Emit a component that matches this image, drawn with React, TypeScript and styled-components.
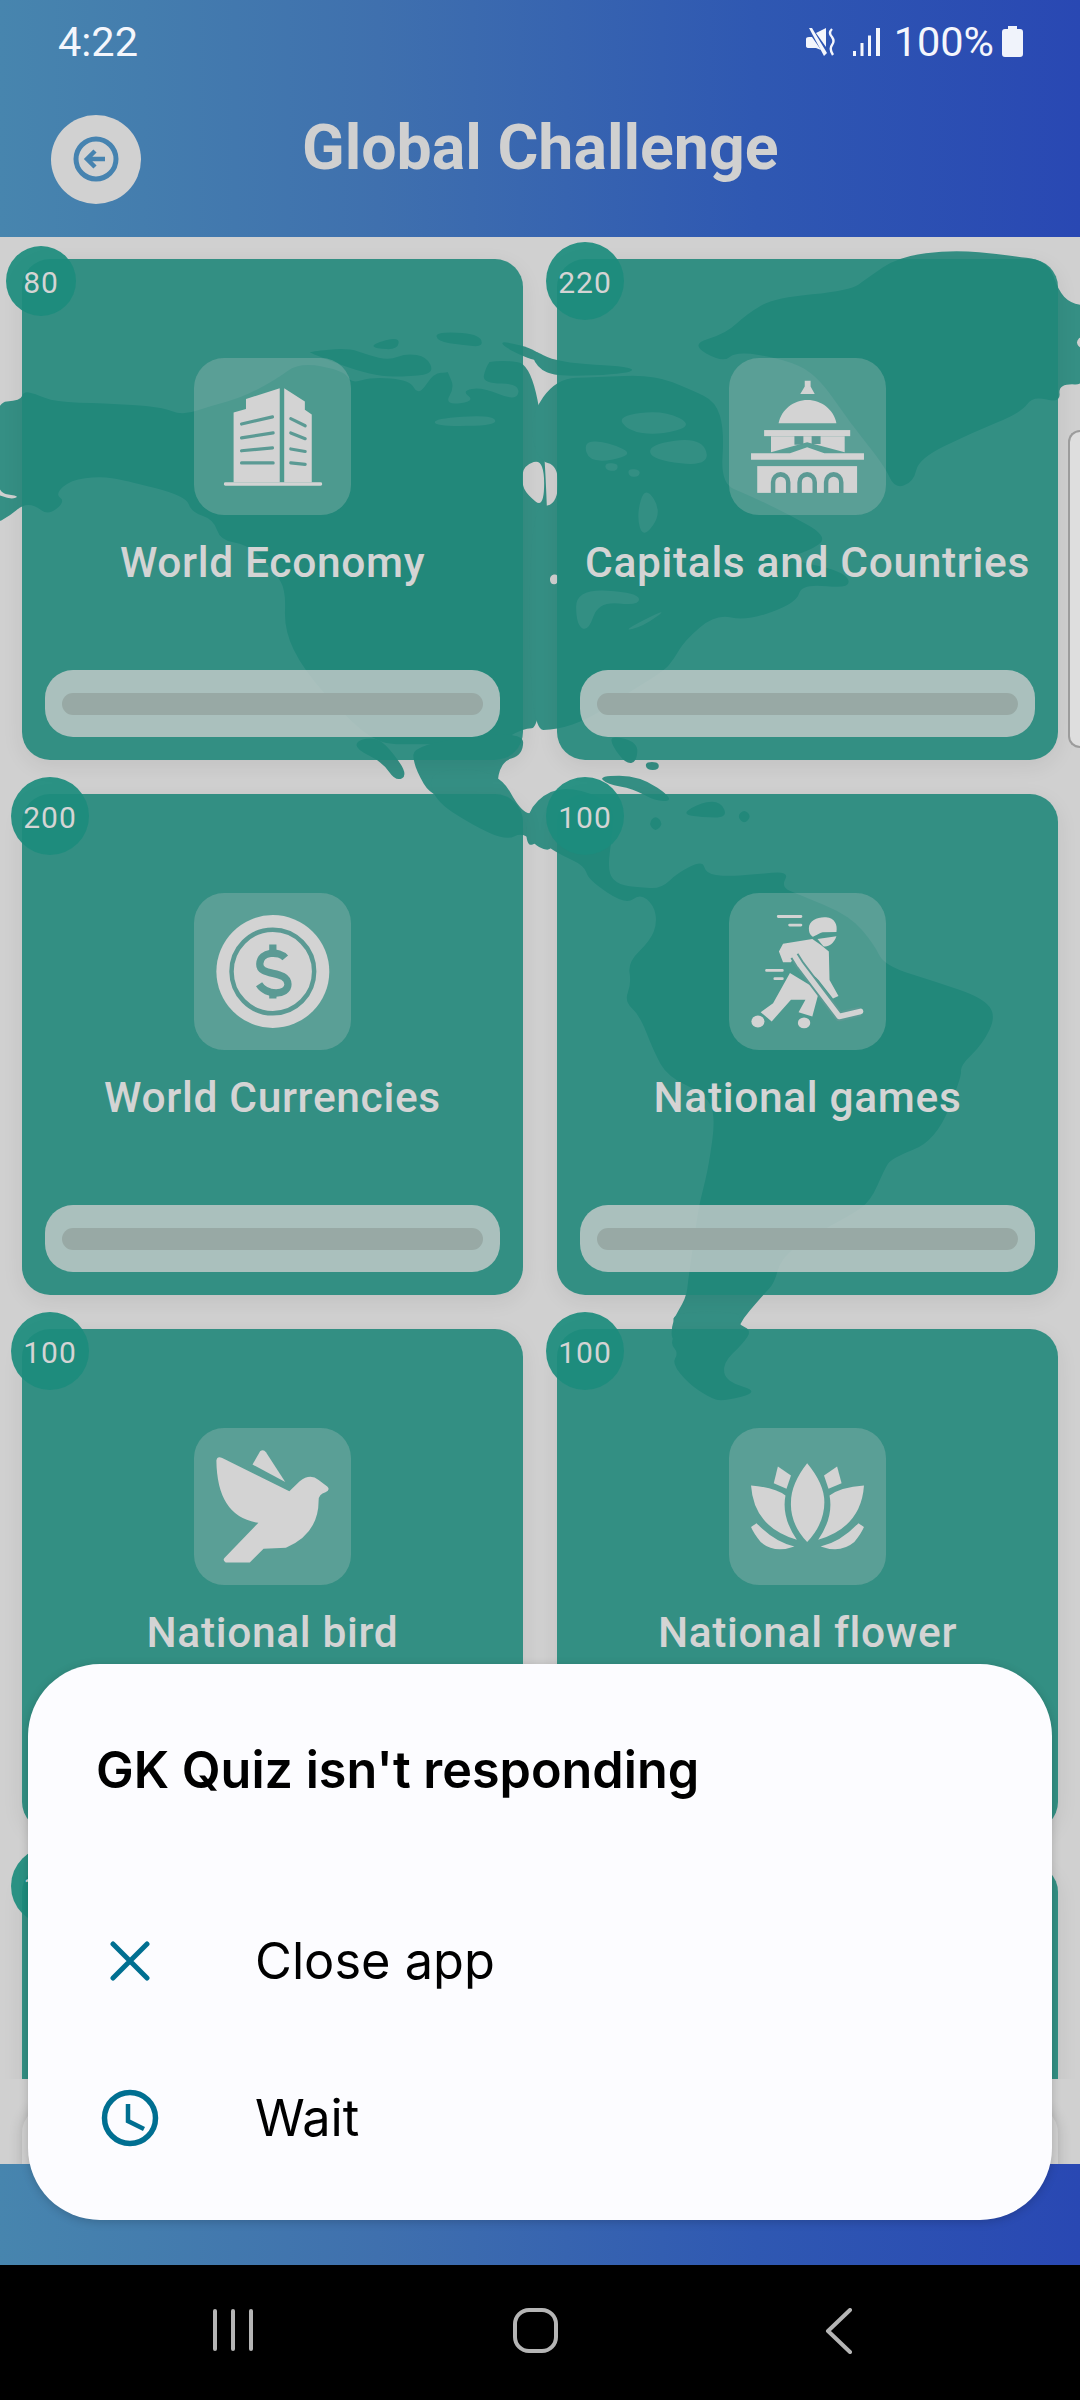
import React from "react";
import styled, { createGlobalStyle } from "styled-components";

const Global = createGlobalStyle`
  html, body { margin: 0; padding: 0; background: #000; }
  * { box-sizing: border-box; }
`;

const gradient = "linear-gradient(90deg,#4785ae 0%,#3f70ae 35%,#2f58b2 70%,#2948b3 100%)";

const Page = styled.div`
  position: relative;
  width: 1080px;
  height: 2400px;
  overflow: hidden;
  display: flex;
  flex-direction: column;
  font-family: Roboto, "Liberation Sans", sans-serif;
  background: #000;
`;
const Header = styled.header`
  height: 237px;
  flex: none;
  background: ${gradient};
  display: flex;
  flex-direction: column;
`;
const StatusBar = styled.div`
  height: 81px;
  flex: none;
  padding: 18px 57px 0 58px;
  display: flex;
  justify-content: space-between;
  align-items: flex-start;
  color: #f4f6fc;
  font-size: 41.5px;
  line-height: 47px;
`;
const StatusRight = styled.div`
  display: flex;
  align-items: center;
  height: 47px;
`;
const Percent = styled.span`
  margin: 0 8px 0 13px;
`;
const AppBar = styled.div`
  flex: 1;
  display: flex;
  align-items: center;
  padding: 0 0 0 51px;
`;
const BackButton = styled.div`
  width: 90px;
  height: 89px;
  border-radius: 50%;
  background: #d1d1d1;
  display: flex;
  align-items: center;
  justify-content: center;
  flex: none;
`;
const Title = styled.h1`
  margin: 0 0 22px 161px;
  font-size: 62.6px;
  line-height: 72px;
  font-weight: 700;
  color: #d0d0d0;
`;
const Main = styled.main`
  position: relative;
  height: 1927px;
  flex: none;
  background: #d0d0d0;
  overflow: hidden;
`;
const MapArt = styled.svg`
  position: absolute;
  left: 0;
  top: 0;
`;
const GridClip = styled.div`
  position: relative;
  height: 1842px;
  overflow: hidden;
`;
const Grid = styled.div`
  display: grid;
  grid-template-columns: 501px 501px;
  grid-auto-rows: 501px;
  column-gap: 34px;
  row-gap: 34px;
  padding: 22px 0 0 22px;
`;
const Card = styled.section`
  position: relative;
  border-radius: 28px;
  background: rgba(32, 135, 121, 0.89);
  box-shadow: 0 6px 22px rgba(0, 0, 0, 0.07);
  display: flex;
  flex-direction: column;
  align-items: center;
  padding-top: 99px;
`;
const Badge = styled.div<{ $narrow?: boolean }>`
  position: absolute;
  left: ${(p) => (p.$narrow ? -16 : -11)}px;
  top: ${(p) => (p.$narrow ? -13 : -17)}px;
  width: ${(p) => (p.$narrow ? 70 : 78)}px;
  height: ${(p) => (p.$narrow ? 70 : 78)}px;
  padding-top: 2px;
  border-radius: 50%;
  background: rgba(28, 140, 125, 0.92);
  color: #d4d4d4;
  font-size: 30px;
  letter-spacing: 1px;
  display: flex;
  align-items: center;
  justify-content: center;
`;
const Tile = styled.div`
  width: 157px;
  height: 157px;
  flex: none;
  border-radius: 30px;
  background: rgba(208, 208, 208, 0.25);
`;
const Label = styled.div`
  margin-top: 24px;
  font-size: 42.5px;
  line-height: 48px;
  font-weight: 500;
  letter-spacing: 0.65px;
  color: #d4d4d4;
  white-space: nowrap;
`;
const Track = styled.div`
  margin-top: auto;
  margin-bottom: 23px;
  width: 455px;
  height: 67px;
  flex: none;
  border-radius: 28px;
  background: rgba(208, 208, 208, 0.76);
  display: flex;
  align-items: center;
  padding: 0 17px;
`;
const TrackFill = styled.div`
  width: 100%;
  height: 22px;
  border-radius: 11px;
  background: #98a9a5;
`;
const NextRow = styled.div`
  margin: 26px 22px 0 22px;
  height: 100px;
  border-radius: 28px 28px 0 0;
  background: #cfcfcf;
  box-shadow: 0 0 14px rgba(0, 0, 0, 0.16);
`;
const SideHandle = styled.div`
  position: absolute;
  right: 0;
  top: 193px;
  width: 12px;
  height: 318px;
  background: #dedede;
  border: 2px solid #9c9c9c;
  border-right: none;
  border-radius: 12px 0 0 12px;
`;
const Footer = styled.footer`
  height: 101px;
  flex: none;
  background: ${gradient};
`;
const NavBar = styled.nav`
  flex: 1;
  background: #000;
  position: relative;
  display: flex;
  align-items: flex-start;
  padding: 43px 0 0 213px;
  gap: 258px;
`;
const Dialog = styled.div`
  position: absolute;
  left: 28px;
  top: 1664px;
  width: 1024px;
  height: 556px;
  border-radius: 72px;
  background: #fcfcff;
  box-shadow: 0 2px 10px rgba(0, 0, 0, 0.18);
  padding: 76px 0 0 0;
  font-family: Inter, Roboto, sans-serif;
  color: #000;
`;
const DialogTitle = styled.h2`
  margin: 0 0 82px 68px;
  font-size: 50.3px;
  line-height: 60px;
  font-weight: 600;
  white-space: nowrap;
`;
const Row = styled.div`
  height: 157px;
  display: flex;
  align-items: center;
  padding-left: 73px;
`;
const RowIcon = styled.div`
  width: 58px;
  display: flex;
  justify-content: center;
  flex: none;
  color: #006f91;
`;
const RowText = styled.span`
  margin-left: 96px;
  font-size: 50.5px;
  font-weight: 400;
`;

const Sea = styled.path`
  fill: #d0d0d0;
`;
const Land = styled.path`
  fill: #358f84;
`;

/* Rounds a traced outline: each vertex becomes the control point of a curve between edge midpoints. */
const smooth = (pts: string) => {
  const n = pts.match(/-?\d+(\.\d+)?/g)!.map(Number);
  const p: [number, number][] = [];
  for (let i = 0; i + 1 < n.length; i += 2) p.push([n[i], n[i + 1]]);
  const mid = (a: [number, number], b: [number, number]) => `${(a[0] + b[0]) / 2} ${(a[1] + b[1]) / 2}`;
  let d = `M${mid(p[p.length - 1], p[0])}`;
  p.forEach((v, i) => {
    d += `Q${v[0]} ${v[1]} ${mid(v, p[(i + 1) % p.length])}`;
  });
  return d + "Z";
};

const L = ({ p }: { p: string }) => <Land d={smooth(p)} />;
const S = ({ p }: { p: string }) => <Sea d={smooth(p)} />;

const A = "translate(0 230) scale(.3444 .3571)";
const B = "translate(540 230) scale(.3444 .3571)";
const C = "translate(0 780) scale(.3444 .3571)";
const D = "translate(540 780) scale(.3444 .3571)";
const F = "translate(540 1320) scale(.3444 .3333)";

const WorldMap = () => (
  <MapArt width={1080} height={1927} viewBox="0 237 1080 1927">
    <g transform={A}>
      <L p="-20 482 60 478 68 452 100 458 160 482 300 485 470 495 530 520 620 490 700 470 800 420 870 370 1000 395 1020 430 1080 412 1190 420 1215 465 1260 400 1300 400 1440 360 1568 380 1600 1000 1568 1395 1519 1395 1440 1440 1200 1440 1100 1440 1000 1360 880 1230 825 1120 830 1010 800 960 720 880 640 870 620 810 555 790 540 745 360 700 290 690 205 700 160 740 190 760 140 800 100 770 65 770 30 800 -20 825 -20 735 30 755 60 745 -20 735" />
      <L p="900 340 1010 330 1070 350 1130 365 1180 345 1240 355 1260 400 1200 410 1080 410 900 345" />
      <L p="1080 320 1160 298 1155 335 1090 332" />
      <L p="1265 285 1390 290 1405 328 1340 322 1270 312" />
      <L p="1450 308 1568 338 1568 374 1470 332" />
      <L p="1200 1440 1519 1400 1519 1470 1450 1490 1440 1600 1260 1600 1200 1500" />
      <L p="1035 1430 1090 1420 1130 1450 1185 1525 1150 1545 1110 1490 1035 1455" />
      <S p="1260 528 1430 518 1445 547 1265 550" />
      <S p="1290 365 1430 358 1410 385 1400 430 1510 430 1500 480 1400 440 1340 450 1380 480 1290 490 1320 440 1300 400" />
      <S p="1519 660 1580 640 1580 780 1530 740 1515 710" />
    </g>
    <g transform={B}>
      <L p="-30 330 50 372 270 382 265 402 50 412 -10 385" />
      <L p="-30 520 49 415 160 412 330 405 440 448 510 480 535 560 525 710 600 740 710 790 840 860 780 900 700 920 885 955 905 1005 760 990 745 1045 600 1095 510 1075 420 1150 390 1200 360 1235 250 1300 140 1370 49 1400 -30 1400 -30 770 49 775 55 660 -10 645" />
      <L p="205 1415 285 1435 280 1490 250 1495 210 1445" />
      <L p="305 1490 345 1490 345 1512 310 1512" />
      <L p="435 320 540 290 600 235 680 190 900 170 950 135 1040 75 1200 55 1350 70 1475 85 1505 170 1540 205 1600 215 1600 435 1505 430 1512 485 1430 465 1400 510 1250 570 1100 640 1085 705 1030 725 1000 660 900 540 800 400 700 360 570 340 530 372" />
      <L p="1542 590 1575 570 1575 605 1555 610" />
      <S p="225 520 360 505 448 548 340 575 255 562" />
      <S p="125 590 200 595 278 630 145 655" />
      <S p="315 600 470 580 495 662 325 645" />
      <S p="190 652 228 655 222 676 190 672" />
      <S p="256 668 292 672 286 692 258 690" />
      <S p="28 968 52 962 52 992 30 992" />
      <S p="105 1005 285 1015 290 1052 170 1040 140 1125 105 1105" />
      <S p="235 1125 378 1055 300 1110" />
      <S p="305 715 355 790 300 865 280 800" />
      <S p="1572 295 1555 315 1572 335" />
    </g>
    <g transform={C}>
      <L p="1245 -30 1258 55 1370 125 1470 170 1519 145 1568 195 1610 195 1610 85 1568 85 1519 100 1445 -30" />
    </g>
    <g transform={D}>
      <L p="-40 90 30 25 120 25 215 70 210 150 195 260 230 295 290 300 350 305 400 260 472 225 482 262 540 270 620 265 725 255 700 300 750 320 900 380 970 460 1000 520 1150 565 1285 610 1325 660 1285 740 1220 800 1225 830 1150 1010 1020 1060 1000 1090 960 1180 900 1220 780 1280 700 1340 680 1410 650 1440 570 1530 575 1590 385 1590 380 1520 425 1450 430 1400 460 1200 470 1160 490 1080 510 940 480 880 370 830 330 760 290 660 245 620 265 570 255 510 320 450 340 400 330 350 290 318 250 350 140 280 130 240 50 205 0 170 -40 190" />
      <L p="170 -12 290 -12 392 55 340 62 270 24 195 12" />
      <L p="410 95 470 62 525 60 545 105 470 105" />
      <L p="315 122 335 98 358 122 335 146" />
      <L p="572 102 593 82 614 102 593 124" />
    </g>
    <g transform={F}>
      <L p="378 -25 398 30 378 70 402 100 383 130 430 190 490 232 530 245 640 215 540 185 530 130 590 70 615 30 570 10 590 -25" />
    </g>
  </MapArt>
);

const fg = "#d3d3d3";
const cut = "#5b9a94";

const IconSvg = styled.svg`
  display: block;
`;

const Building = () => (
  <IconSvg width={157} height={157} viewBox="563 360 456 440" preserveAspectRatio="none">
    <path fill={fg} d="M678 708V513L714 503V475L812 445V708Z" />
    <path fill={fg} d="M825 708V445L885 482V505L905 518V708Z" />
    <rect x="650" y="708" width="285" height="10" rx="4" fill={fg} />
    <g stroke={cut} strokeWidth="9" strokeLinecap="round">
      <path d="M701 545 791 525M701 584 793 570M701 620 791 612M701 654 793 654" />
      <path d="M844 530 886 550M844 570 886 586M844 615 886 622M844 654 886 658" />
    </g>
  </IconSvg>
);
const Capitol = () => (
  <IconSvg width={157} height={157} viewBox="548 360 456 440" preserveAspectRatio="none">
    <g fill={fg}>
      <path d="M768 424H785V440L797 461H755L768 440Z" />
      <path d="M692 543C700 505 735 478 776 478S852 505 860 543Z" />
      <rect x="650" y="562" width="250" height="17" />
      <path d="M670 579H884V624L775 596 670 624Z" />
      <path d="M612 645V627H725L775 610 825 627H940V645Z" />
      <rect x="630" y="663" width="290" height="75" />
    </g>
    <g fill={cut}>
      <rect x="738" y="579" width="26" height="24" />
      <rect x="788" y="579" width="26" height="22" />
    </g>
    <g fill="none" stroke={cut} strokeWidth="13">
      <path d="M676 738V708A22 22 0 0 1 720 708V738" />
      <path d="M753 738V708A22 22 0 0 1 797 708V738" />
      <path d="M830 738V708A22 22 0 0 1 874 708V738" />
    </g>
  </IconSvg>
);
const Coin = () => (
  <IconSvg width={157} height={157} viewBox="563 316 456 440" preserveAspectRatio="none">
    <ellipse cx="792" cy="536" rx="164" ry="158" fill={fg} />
    <ellipse cx="792" cy="536" rx="120" ry="117" fill="none" stroke={cut} strokeWidth="13" />
    <g fill="none" stroke={cut} strokeWidth="21">
      <path d="M828 498C812 478 755 478 754 515 753 552 834 530 836 572 836 604 772 604 752 572" />
      <path d="M792 460V482M792 590V612" />
    </g>
  </IconSvg>
);
const Hockey = () => (
  <IconSvg width={157} height={157} viewBox="548 316 456 440" preserveAspectRatio="none">
    <g fill={fg}>
      <path d="M780 415C780 392 808 382 830 384 855 386 864 405 860 425L820 426C805 430 795 440 790 438 782 432 780 425 780 415Z" />
      <path d="M805 445 860 437C852 460 835 468 822 465Z" />
      <path d="M693 480 705 458 790 445 815 462 838 480 840 560 866 605 850 612 808 560 800 552 762 530 740 490 728 510 705 510Z" />
      <path d="M725 540 810 590 790 662 750 650 770 615 728 615 672 676 640 650 676 625Z" />
      <ellipse cx="632" cy="676" rx="19" ry="17" />
      <ellipse cx="766" cy="680" rx="18" ry="15" />
    </g>
    <path d="M738 492 755 518 868 662 930 648" fill="none" stroke={cut} strokeWidth="27" strokeLinejoin="round" />
    <path d="M738 492 755 518 868 662 930 648" fill="none" stroke={fg} strokeWidth="16" strokeLinecap="round" strokeLinejoin="round" />
    <g stroke={fg} strokeWidth="8" strokeLinecap="round">
      <path d="M691 382H757M724 406H757M657 533H703M681 556H703" />
    </g>
  </IconSvg>
);
const Bird = () => (
  <IconSvg width={157} height={157} viewBox="563 322 456 472" preserveAspectRatio="none">
    <path fill={fg} d="M628 420Q630 405 645 412L840 512 870 482Q900 458 925 478L950 498Q960 508 945 515 925 520 925 540 925 640 830 682L765 685 725 726H655Q645 720 652 712L750 607Q630 590 628 420Z" />
    <path fill={fg} d="M733 432 755 392Q765 385 772 395L828 484Z" />
  </IconSvg>
);
const Lotus = () => (
  <IconSvg width={157} height={157} viewBox="548 322 456 472" preserveAspectRatio="none">
    <g fill={fg}>
      <path d="M775 428Q825 490 825 545 825 610 775 665 725 610 728 545 728 490 775 428Z" />
      <path d="M612 495Q680 500 712 525 700 590 745 658 620 620 612 495Z" />
      <path d="M940 495Q872 500 840 525 852 590 807 658 932 620 940 495Z" />
      <path d="M690 438 728 465 715 505 678 488Z" />
      <path d="M862 438 824 465 837 505 875 488Z" />
      <path d="M628 608Q680 665 738 678 680 700 640 665 620 640 612 620Z" />
      <path d="M924 608Q872 665 814 678 872 700 912 665 932 640 940 620Z" />
    </g>
  </IconSvg>
);

const cards = [
  { points: "80", label: "World Economy", icon: <Building />, narrow: true },
  { points: "220", label: "Capitals and Countries", icon: <Capitol /> },
  { points: "200", label: "World Currencies", icon: <Coin /> },
  { points: "100", label: "National games", icon: <Hockey /> },
  { points: "100", label: "National bird", icon: <Bird /> },
  { points: "100", label: "National flower", icon: <Lotus /> },
  { points: "100", label: "", icon: null },
  { points: "100", label: "", icon: null },
];

export default function App() {
  return (
    <Page>
      <Global />
      <Header>
        <StatusBar>
          <span>4:22</span>
          <StatusRight>
            <svg width="30" height="28" viewBox="0 0 30 28">
              <g fill="#f4f6fc">
                <path d="M3 0 6 0 21 25 18 28Z" />
                <path d="M10 5 20 0V19Z" />
                <path d="M0 11Q0 9 3 9H6L15 22 10 20 3 20Q0 20 0 18Z" />
              </g>
              <path d="M26 1Q22 5 26 9 29 13 26 17 23 21 27 27" fill="none" stroke="#f4f6fc" strokeWidth="2.4" />
            </svg>
            <svg width="28" height="28" viewBox="0 0 28 28" style={{ marginLeft: 17 }}>
              <g fill="#f4f6fc">
                <rect x="0" y="23" width="3" height="5" />
                <rect x="7.5" y="15" width="3" height="13" />
                <rect x="15" y="7.5" width="3" height="20.5" />
                <rect x="23" y="0" width="4" height="28" />
              </g>
            </svg>
            <Percent>100%</Percent>
            <svg width="21" height="31" viewBox="0 0 21 31">
              <path fill="#f0f3fb" d="M6 0H15V3H18Q21 3 21 6V28Q21 31 18 31H3Q0 31 0 28V6Q0 3 3 3H6Z" />
            </svg>
          </StatusRight>
        </StatusBar>
        <AppBar>
          <BackButton>
            <svg width="46" height="46" viewBox="0 0 46 46">
              <circle cx="23" cy="23" r="20" fill="none" stroke="#4683b0" strokeWidth="5" />
              <path d="M32 23H15M22 15 14 23 22 31" fill="none" stroke="#4683b0" strokeWidth="4.5" />
            </svg>
          </BackButton>
          <Title>Global Challenge</Title>
        </AppBar>
      </Header>
      <Main>
        <WorldMap />
        <GridClip>
          <Grid>
            {cards.map((c, i) => (
              <Card key={i}>
                <Badge $narrow={c.narrow}>{c.points}</Badge>
                {c.icon && <Tile>{c.icon}</Tile>}
                {c.label && <Label>{c.label}</Label>}
                {c.icon && (
                  <Track>
                    <TrackFill />
                  </Track>
                )}
              </Card>
            ))}
          </Grid>
        </GridClip>
        <NextRow />
        <SideHandle />
      </Main>
      <Footer />
      <NavBar>
        <svg width="42" height="44" viewBox="0 0 42 44">
          <g fill="#b5b5b5">
            <rect x="0" y="1" width="4" height="42" rx="2" />
            <rect x="18" y="1" width="4" height="42" rx="2" />
            <rect x="36" y="1" width="4" height="42" rx="2" />
          </g>
        </svg>
        <svg width="46" height="46" viewBox="0 0 46 46">
          <rect x="2" y="2" width="41" height="41" rx="14" fill="none" stroke="#b5b5b5" strokeWidth="4" />
        </svg>
        <svg width="28" height="46" viewBox="0 0 28 46" style={{ marginLeft: 8 }}>
          <path d="M25 2 3 23 25 44" fill="none" stroke="#b5b5b5" strokeWidth="4" strokeLinecap="round" strokeLinejoin="round" />
        </svg>
      </NavBar>
      <Dialog>
        <DialogTitle>GK Quiz isn't responding</DialogTitle>
        <Row>
          <RowIcon>
            <svg width="40" height="40" viewBox="0 0 40 40">
              <path d="M3 3 37 37M37 3 3 37" fill="none" stroke="currentColor" strokeWidth="5" strokeLinecap="round" />
            </svg>
          </RowIcon>
          <RowText>Close app</RowText>
        </Row>
        <Row>
          <RowIcon>
            <svg width="58" height="58" viewBox="0 0 58 58">
              <circle cx="29" cy="29" r="25.5" fill="none" stroke="currentColor" strokeWidth="5.5" />
              <path d="M27 15V32L43 40" fill="none" stroke="currentColor" strokeWidth="4.5" />
            </svg>
          </RowIcon>
          <RowText>Wait</RowText>
        </Row>
      </Dialog>
    </Page>
  );
}
